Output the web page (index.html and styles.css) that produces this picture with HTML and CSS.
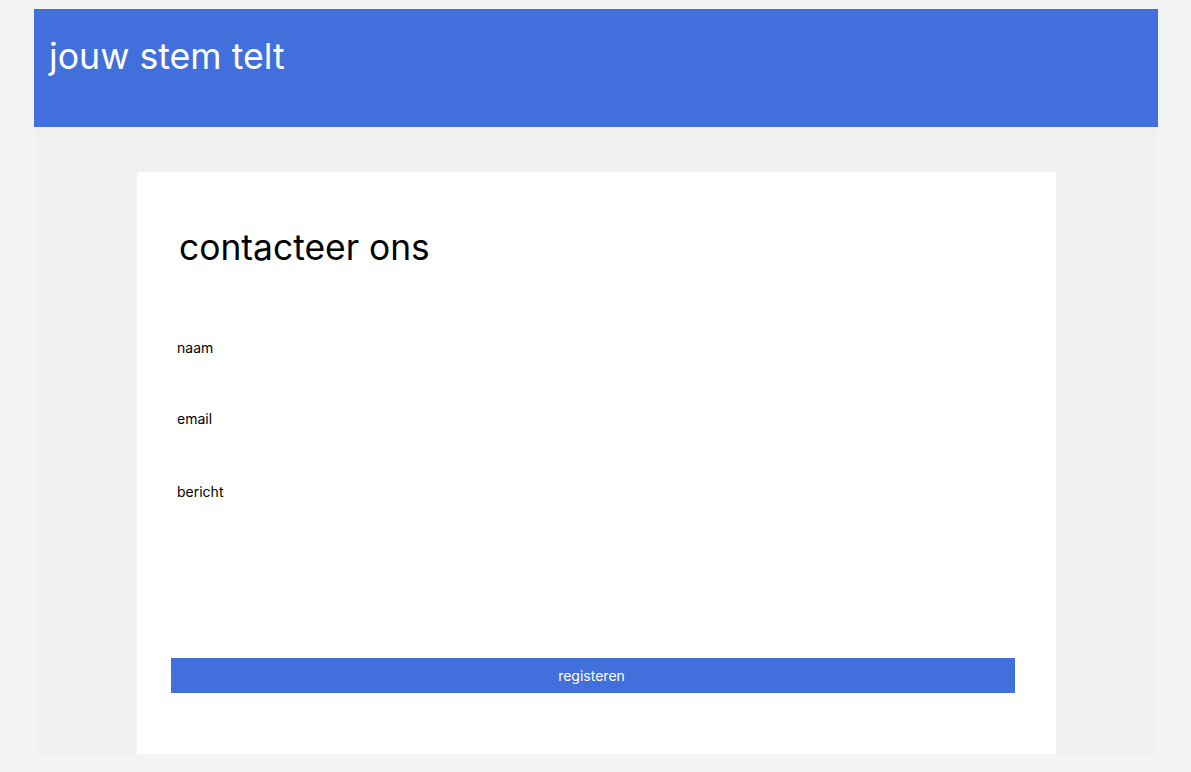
FILE: index.html
```html
<!DOCTYPE html>
<html lang="nl">
<head>
<meta charset="utf-8">
<title>jouw stem telt</title>
<link rel="stylesheet" href="styles.css">
</head>
<body>
<div class="page">
  <header class="header">
    <h1 class="brand">jouw stem telt</h1>
  </header>
  <main class="content">
    <section class="card">
      <h2 class="title">contacteer ons</h2>
      <form class="form">
        <label class="field field-naam">naam</label>
        <label class="field field-email">email</label>
        <label class="field field-bericht">bericht</label>
        <button type="button" class="submit">registeren</button>
      </form>
    </section>
  </main>
</div>
</body>
</html>
```

FILE: styles.css
```css
html, body {
  margin: 0;
  padding: 0;
}
body {
  background: #f4f4f4;
  font-family: Inter, "Noto Sans", sans-serif;
  color: #000;
}
.page {
  margin: 9px 33px 0 34px;
  display: flex;
  flex-direction: column;
}
.header {
  background: #4170dc;
  height: 118px;
  box-sizing: border-box;
  padding: 27px 15px 0;
}
.brand {
  margin: 0;
  font-size: 35.7px;
  font-weight: 400;
  color: #fff;
  line-height: 40px;
}
.content {
  background: #f1f1f1;
  padding: 45px 102px 0 103px;
  height: 627px;
  box-sizing: border-box;
}
.card {
  background: #fff;
  height: 582px;
  box-sizing: border-box;
  padding: 54px 41px 0 34px;
}
.title {
  margin: 0 0 0 8px;
  font-size: 35.4px;
  font-weight: 400;
  line-height: 44px;
}
.form {
  display: flex;
  flex-direction: column;
}
.field {
  font-size: 14px;
  line-height: 17px;
  margin-left: 6px;
}
.field-naam { margin-top: 69px; }
.field-email { margin-top: 54px; }
.field-bericht { margin-top: 56px; }
.submit {
  margin-top: 158px;
  height: 35px;
  border: 0;
  background: #4170dc;
  color: #fff;
  font-family: Inter, "Noto Sans", sans-serif;
  font-size: 14px;
  padding: 0 3px 0 0;
}
```
